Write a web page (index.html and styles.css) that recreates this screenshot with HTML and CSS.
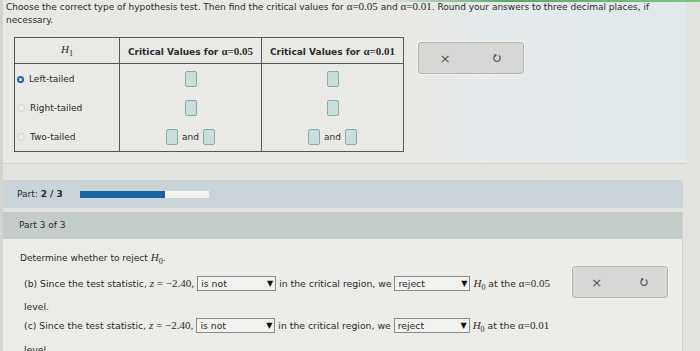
FILE: index.html
```html
<!DOCTYPE html>
<html lang="en">
<head>
  <meta charset="UTF-8" />
  <title>Hypothesis test</title>
  <link rel="stylesheet" href="styles.css">
</head>
<body>
  <div class="page">
    <section class="q1">
      <p class="prompt">Choose the correct type of hypothesis test. Then find the critical values for <span class="m">α=0.05</span> and <span class="m">α=0.01</span>. Round your answers to three decimal places, if necessary.</p>
      <div class="q1-body">
        <table class="hyp">
          <tr class="head">
            <th class="c1"><span class="m"><i>H</i><sub>1</sub></span></th>
            <th>Critical Values for <span class="m">α=0.05</span></th>
            <th>Critical Values for <span class="m">α=0.01</span></th>
          </tr>
          <tr>
            <td class="c1"><span class="radio on"></span>Left-tailed</td>
            <td><span class="box"></span></td>
            <td><span class="box"></span></td>
          </tr>
          <tr>
            <td class="c1"><span class="radio"></span>Right-tailed</td>
            <td><span class="box"></span></td>
            <td><span class="box"></span></td>
          </tr>
          <tr>
            <td class="c1"><span class="radio"></span>Two-tailed</td>
            <td><span class="box"></span><span class="and">and</span><span class="box"></span></td>
            <td><span class="box"></span><span class="and">and</span><span class="box"></span></td>
          </tr>
        </table>
        <div class="tools">
          <span class="x">×</span>
          <svg class="undo" width="10" height="10" viewBox="0 0 10 10"><path d="M6.6 2.5A3.2 3.2 0 1 1 3.2 2.6" fill="none" stroke="#555" stroke-width="1.2"/><path d="M1.9 0.9L5 1.7L3.1 4Z" fill="#555"/></svg>
        </div>
      </div>
    </section>

    <div class="part-bar">
      <span>Part: <b>2 / 3</b></span>
      <div class="progress"><span style="width: 66%"></span></div>
    </div>

    <section class="part3">
      <div class="part3-head">Part 3 of 3</div>
      <div class="part3-body">
        <p class="ask">Determine whether to reject <span class="m"><i>H</i><sub>0</sub></span>.</p>
        <div class="part3-row">
          <div class="answers">
            <p>(b) Since the test statistic, <span class="m"><i>z</i> = −2.40</span>, <span class="select sel-a">is not<em>▼</em></span> in the critical region, we <span class="select sel-b">reject<em>▼</em></span> <span class="m"><i>H</i><sub>0</sub></span> at the <span class="m">α=0.05</span><br>level.</p>
            <p>(c) Since the test statistic, <span class="m"><i>z</i> = −2.40</span>, <span class="select sel-a">is not<em>▼</em></span> in the critical region, we <span class="select sel-b">reject<em>▼</em></span> <span class="m"><i>H</i><sub>0</sub></span> at the <span class="m">α=0.01</span><br>level.</p>
          </div>
          <div class="tools tools-2">
            <span class="x">×</span>
            <svg class="undo" width="10" height="10" viewBox="0 0 10 10"><path d="M6.6 2.5A3.2 3.2 0 1 1 3.2 2.6" fill="none" stroke="#555" stroke-width="1.2"/><path d="M1.9 0.9L5 1.7L3.1 4Z" fill="#555"/></svg>
          </div>
        </div>
      </div>
    </section>
  </div>
</body>
</html>
```

FILE: styles.css
```css
body {
  margin: 0;
  background: #e2e2df;
  font-family: "DejaVu Sans", Verdana, sans-serif;
  font-size: 9px;
  color: #2a2a2a;
  overflow: hidden;
}
p { margin: 0; }
.page {
  width: 700px;
  height: 351px;
  overflow: hidden;
  border-left: 3px solid #d3d3d0;
  box-sizing: border-box;
}
.m {
  font-family: "Liberation Serif", "Times New Roman", serif;
  font-size: 11px;
}
.m sub { font-size: 8px; }

/* first question */
.q1 {
  height: 163px;
  margin-right: 14px;
  padding: 0 0 0 3px;
  border-bottom: 1px solid #cfcfcc;
  background: linear-gradient(90deg, #e8e8e5 0, #e8e8e5 62%, #e5eaec 70%, #e1e9ed 100%);
  position: relative;
}
.q1::before {
  content: "";
  position: absolute;
  top: 0; left: 55%; right: -14px;
  height: 2px;
  background: linear-gradient(90deg, rgba(80,160,90,0), #5aa865 40%, #80c47f);
}
.prompt {
  line-height: 13px;
  width: 650px;
}
.q1-body {
  display: flex;
  align-items: flex-start;
  gap: 14px;
  margin: 10px 0 0 8px;
}
.hyp {
  border-collapse: collapse;
  border: 1px solid #555;
  background: #e9e9e6;
}
.hyp th {
  height: 25px;
  font-weight: bold;
  border: 1px solid #555;
  width: 141px;
  text-align: center;
  padding: 0;
}
.hyp th.c1 { width: 104px; font-weight: normal; }
.hyp td {
  height: 29px;
  padding: 0;
  text-align: center;
  border-left: 1px solid #555;
  vertical-align: middle;
}
.hyp td.c1 {
  text-align: left;
  padding-left: 2px;
}
.radio {
  display: inline-block;
  width: 6px;
  height: 6px;
  border: 1px solid #d2d2d0;
  border-radius: 50%;
  background: #ececea;
  margin-right: 5px;
  vertical-align: -1px;
}
.radio.on {
  border: 2px solid #1f5fb4;
  width: 3px;
  height: 3px;
  background: #fff;
}
.box {
  display: inline-block;
  width: 10px;
  height: 14px;
  border: 1px solid #84ada8;
  border-radius: 2px;
  background: #c9dedb;
  vertical-align: middle;
}
.and {
  margin: 0 4px;
  vertical-align: middle;
}
.tools {
  width: 104px;
  height: 30px;
  margin-top: 5px;
  display: flex;
  justify-content: space-around;
  align-items: center;
  background: #d7d8d5;
  border: 1px solid #b3b4b1;
  border-radius: 3px;
  box-shadow: 0 0 0 1px #f2f2f0;
  color: #555;
}
.x { font-size: 13px; line-height: 1; }

/* part progress */
.part-bar {
  margin: 16px 17px 0 0;
  height: 28px;
  background: #cad4d8;
  border-radius: 2px;
  display: flex;
  align-items: center;
  gap: 17px;
  padding-left: 14px;
}
.progress {
  width: 129px;
  height: 7px;
  background: #f2f3f1;
}
.progress span {
  display: block;
  height: 100%;
  background: #1d62a0;
}

/* part 3 */
.part3 {
  margin: 4px 17px 0 0;
  border-right: 1px solid #cfcfcc;
}
.part3-head {
  height: 27px;
  line-height: 27px;
  background: #c4ccc9;
  padding-left: 16px;
}
.part3-body {
  background: #ebebe8;
  padding: 12px 0 0 17px;
  height: 120px;
}
.ask { line-height: 12px; }
.part3-row {
  display: flex;
  align-items: flex-start;
  gap: 20px;
  margin-top: 6px;
}
.answers {
  width: 528px;
  padding-left: 4px;
  font-size: 9.3px;
}
.answers p { line-height: 19px; }
.select {
  display: inline-block;
  position: relative;
  box-sizing: border-box;
  height: 15px;
  padding: 0 0 0 3px;
  border: 1px solid #8b8b88;
  background: #f1f1ef;
  line-height: 13px;
}
.select em {
  position: absolute;
  right: 2px;
  top: 0;
  font-style: normal;
  font-size: 8px;
  color: #111;
}
.sel-a { width: 79px; }
.sel-b { width: 76px; }
.tools-2 {
  width: 94px;
  margin-top: -8px;
}
```
